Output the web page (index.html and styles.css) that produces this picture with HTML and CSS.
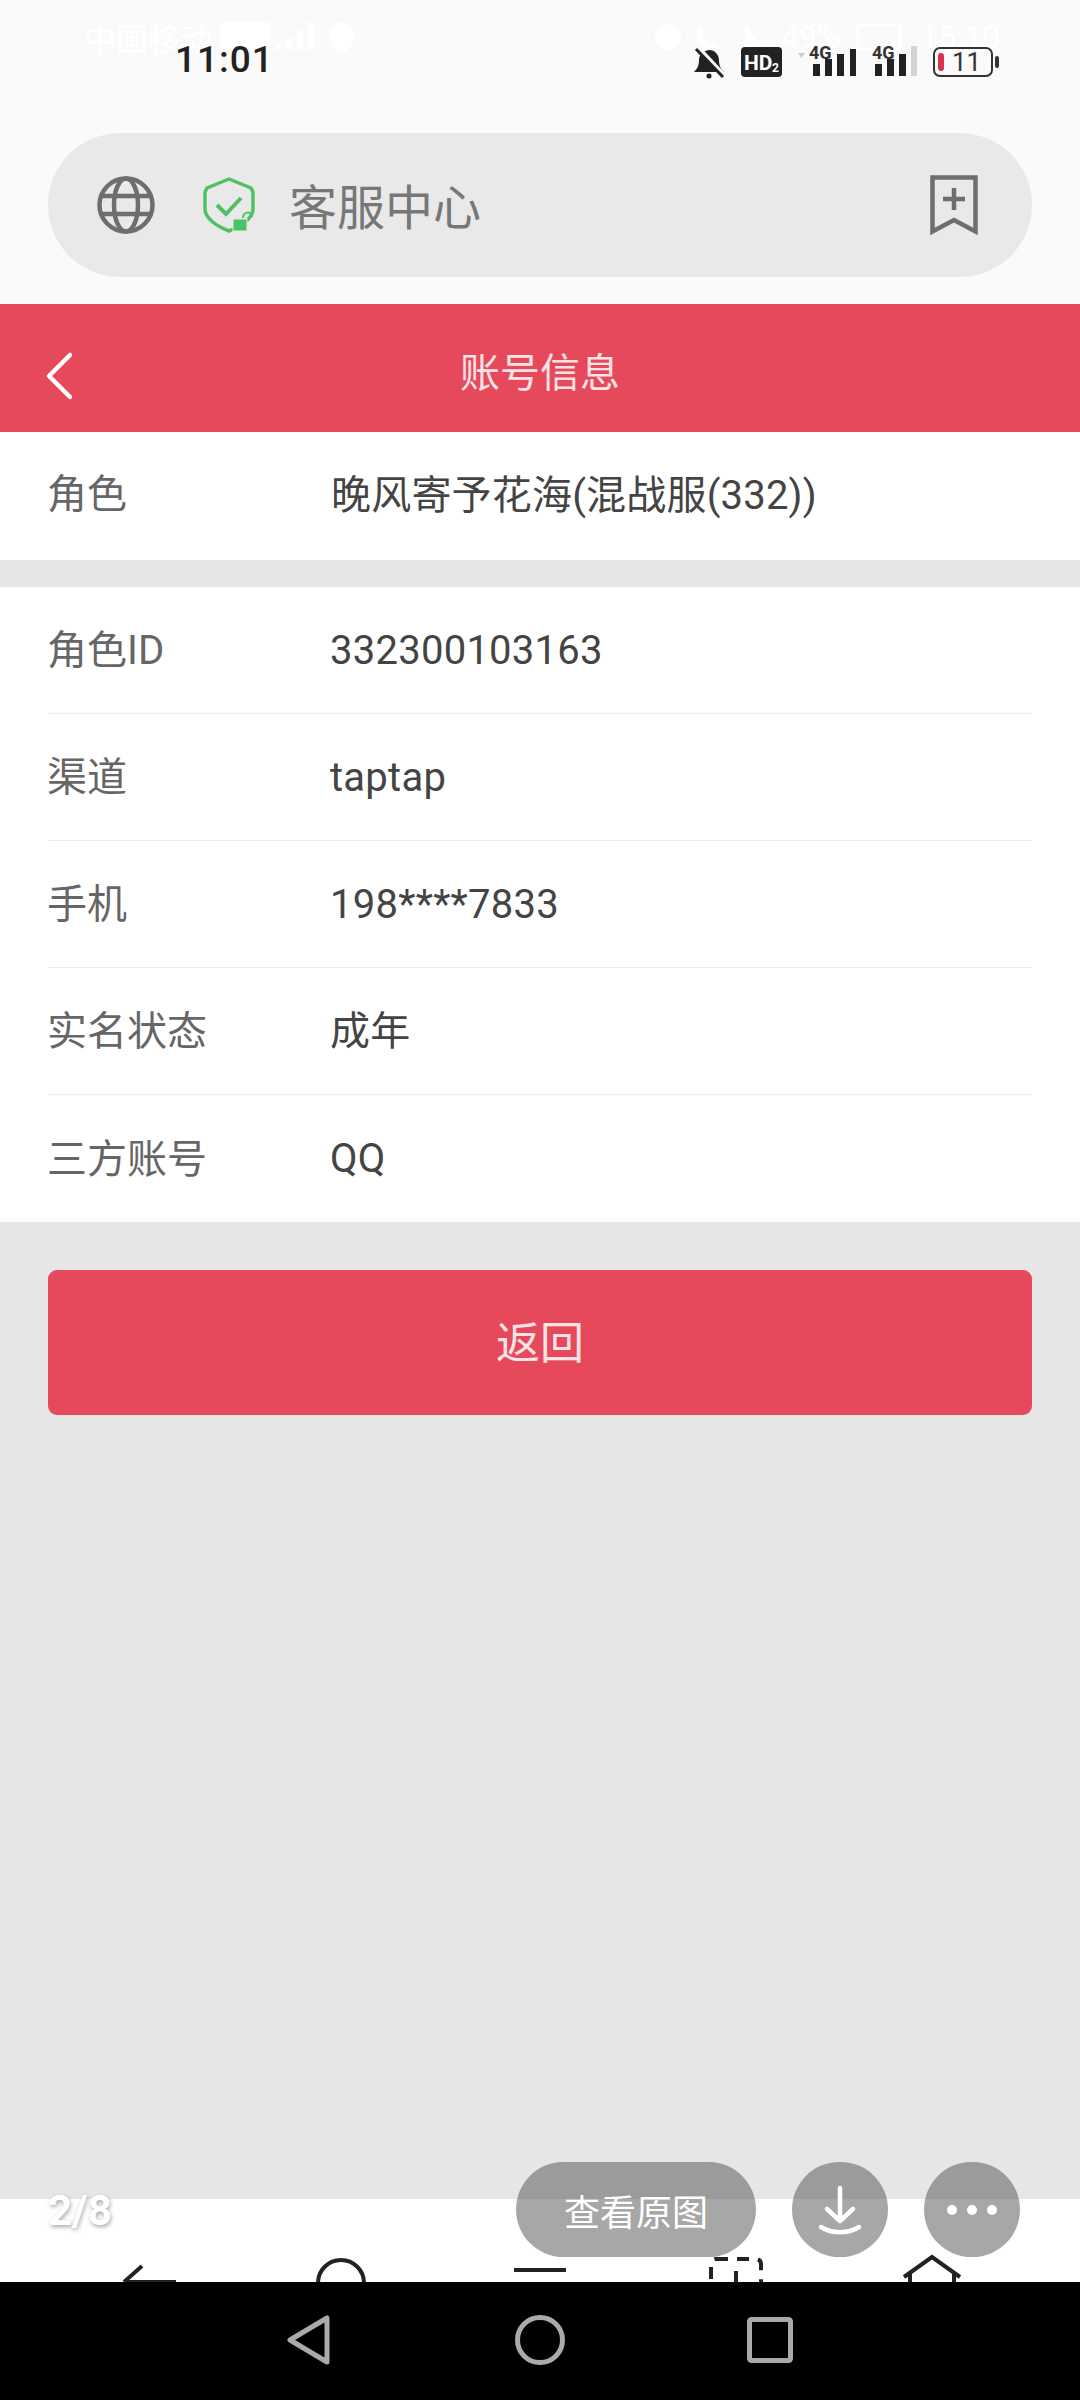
FILE: index.html
```html
<!DOCTYPE html>
<html lang="zh-CN">
<head>
    <meta charset="UTF-8">
    <meta name="viewport" content="width=device-width, initial-scale=1.0">
    <title>账号信息</title>
    <link rel="stylesheet" href="styles.css">
</head>
<body>

<div class="screen">
    <!-- leftovers of the screenshot below this one, white on near white -->
    <div class="ghost-status">
        <span>中国移动</span>
        <svg class="ghost-left-icons" width="135" height="30" viewBox="0 0 135 30" fill="#fff">
            <rect x="0" y="0" width="50" height="28" rx="3"/>
            <rect x="55" y="22" width="6" height="6"/>
            <rect x="66" y="16" width="6" height="12"/>
            <rect x="77" y="8" width="6" height="20"/>
            <rect x="88" y="0" width="6" height="28"/>
            <ellipse cx="122" cy="15" rx="12" ry="15"/>
        </svg>
        <svg class="ghost-right-icons" width="110" height="30" viewBox="0 0 110 30" fill="#fff">
            <circle cx="13" cy="15" r="13"/>
            <path d="M48 2a13 13 0 1 0 16 20a15 15 0 0 1-16-20z"/>
            <path d="M90 2l20 26H90z"/>
        </svg>
        <span class="ghost-text">49%</span>
        <svg class="ghost-batt" width="46" height="28" viewBox="0 0 46 28" fill="none" stroke="#fff" stroke-width="3">
            <rect x="2" y="2" width="42" height="24"/>
        </svg>
        <span class="ghost-text">15:10</span>
    </div>

    <!-- browser chrome -->
    <div class="browser">
        <div class="status-bar">
            <div class="time">11:01</div>
            <div class="status-icons">
                <svg class="icon-bell" width="32" height="32" viewBox="0 0 32 32">
                    <path d="M1 25c3-3 5-6 5-12 0-5 4-9 10-10 6 0 10 5 10 10 0 6 2 9 5 12z" fill="#222"/>
                    <circle cx="16" cy="29" r="2.500" fill="#222"/>
                    <path d="M5 0l27 29" stroke="#fafafa" stroke-width="4"/>
                    <path d="M3 2l27 28" stroke="#222" stroke-width="3"/>
                </svg>
                <svg class="icon-hd" width="41" height="30" viewBox="0 0 41 30">
                    <rect width="41" height="30" rx="4" fill="#222"/>
                    <text x="3" y="23" class="hd-text">HD</text>
                    <text x="31" y="25" class="hd-small">2</text>
                </svg>
                <svg class="icon-signal" width="58" height="34" viewBox="0 0 58 34">
                    <path d="M0 9h7l-3.500 5z" fill="#ccc"/>
                    <text x="11" y="15" class="net-text">4G</text>
                    <rect x="15" y="20" width="7" height="12" fill="#222"/>
                    <rect x="27" y="15" width="7" height="17" fill="#222"/>
                    <rect x="39" y="10" width="7" height="22" fill="#222"/>
                    <rect x="52" y="5" width="6" height="27" fill="#222"/>
                </svg>
                <svg class="icon-signal-2" width="45" height="34" viewBox="0 0 45 34">
                    <text x="0" y="15" class="net-text">4G</text>
                    <rect x="3" y="20" width="7" height="12" fill="#222"/>
                    <rect x="15" y="15" width="7" height="17" fill="#222"/>
                    <rect x="27" y="10" width="7" height="22" fill="#222"/>
                    <rect x="39" y="2" width="6" height="30" fill="#d4d4d4"/>
                </svg>
                <svg class="icon-battery" width="67" height="30" viewBox="0 0 67 30">
                    <rect x="1" y="1" width="58" height="28" rx="6" fill="none" stroke="#333" stroke-width="2"/>
                    <rect x="5" y="6" width="6" height="18" rx="3" fill="#d8324e"/>
                    <rect x="62" y="9" width="4" height="12" rx="2" fill="#333"/>
                    <text x="19" y="24" class="battery-text">11</text>
                </svg>
            </div>
        </div>

        <div class="url-pill">
            <svg class="icon-globe" width="58" height="58" viewBox="0 0 58 58" fill="none" stroke="#6e6e6e" stroke-width="4.500">
                <circle cx="29" cy="29" r="26.500"/>
                <ellipse cx="29" cy="29" rx="12" ry="26.500"/>
                <path d="M5 20h48M5 38h48"/>
            </svg>
            <svg class="icon-shield" width="52" height="56" viewBox="0 0 52 56" fill="none">
                <path d="M26 2l22 9 2 4v17c0 9-11 17-24 22C13 49 2 41 2 32V15l2-4z" stroke="#4cc266" stroke-width="3.500" stroke-linejoin="round"/>
                <path d="M14 28l9 9 15-16" stroke="#4cc266" stroke-width="4"/>
                <rect x="30" y="42" width="14" height="12" fill="#4cc266" stroke="#e9e9e9" stroke-width="1"/>
                <path d="M40 41c0-7 9-7 9-1" stroke="#4cc266" stroke-width="2"/>
            </svg>
            <span class="url-text">客服中心</span>
            <svg class="icon-bookmark" width="48" height="60" viewBox="0 0 48 60" fill="none" stroke="#6e6e6e" stroke-width="4.500">
                <path d="M2.500 2.500h43v54L24 45 2.500 56.500z"/>
                <path d="M13 24h22M24 13v22"/>
            </svg>
        </div>
    </div>

    <!-- page header -->
    <div class="header">
        <svg class="icon-back" width="28" height="48" viewBox="0 0 28 48" fill="none" stroke="#fff" stroke-width="4.500" stroke-linecap="round" stroke-linejoin="round">
            <path d="M25 3L4 24l21 21"/>
        </svg>
        <div class="header-title">账号信息</div>
    </div>

    <div class="section section-role">
        <div class="row">
            <div class="label">角色</div>
            <div class="value">晚风寄予花海(混战服(332))</div>
        </div>
    </div>

    <div class="section section-info">
        <div class="row">
            <div class="label">角色ID</div>
            <div class="value">332300103163</div>
        </div>
        <div class="row">
            <div class="label">渠道</div>
            <div class="value">taptap</div>
        </div>
        <div class="row">
            <div class="label">手机</div>
            <div class="value">198****7833</div>
        </div>
        <div class="row">
            <div class="label">实名状态</div>
            <div class="value value-cjk">成年</div>
        </div>
        <div class="row">
            <div class="label">三方账号</div>
            <div class="value">QQ</div>
        </div>
    </div>

    <div class="button-wrap">
        <div class="back-button">返回</div>
    </div>

    <div class="spacer"></div>

    <!-- browser tabs, cut off by the nav bar -->
    <div class="tabs">
        <svg width="60" height="83" viewBox="0 0 60 83" fill="none" stroke="#222" stroke-width="4">
            <path d="M24 67L6 83"/>
            <path d="M6 83h52"/>
        </svg>
        <svg class="tab-circle" width="60" height="83" viewBox="0 0 60 83" fill="none" stroke="#222" stroke-width="4">
            <circle cx="30" cy="84" r="23"/>
        </svg>
        <svg width="60" height="83" viewBox="0 0 60 83" fill="none" stroke="#222" stroke-width="4">
            <path d="M4 71h52"/>
        </svg>
        <svg width="60" height="83" viewBox="0 0 60 83" fill="none" stroke="#222" stroke-width="4" stroke-dasharray="12 9">
            <rect x="5" y="60" width="50" height="50" rx="5"/>
            <path d="M30 72v11" stroke-dasharray="none"/>
        </svg>
        <svg width="60" height="83" viewBox="0 0 60 83" fill="none" stroke="#222" stroke-width="4">
            <path d="M2 78l28-20 28 20M8 74v9M52 74v9"/>
        </svg>
    </div>

    <div class="nav-bar">
        <svg width="44" height="50" viewBox="0 0 44 50" fill="none" stroke="#aaa" stroke-width="5" stroke-linejoin="round">
            <path d="M40 3v44L3 25z"/>
        </svg>
        <svg class="nav-circle" width="50" height="50" viewBox="0 0 50 50" fill="none" stroke="#aaa" stroke-width="5">
            <circle cx="25" cy="25" r="22.500"/>
        </svg>
        <svg width="46" height="46" viewBox="0 0 46 46" fill="none" stroke="#aaa" stroke-width="5" stroke-linejoin="round">
            <rect x="2.500" y="2.500" width="41" height="41" rx="2"/>
        </svg>
    </div>

    <div class="page-count">2/8</div>

    <div class="viewer-actions">
        <div class="viewer-pill">查看原图</div>
        <div class="viewer-round">
            <svg width="42" height="48" viewBox="0 0 42 48" fill="none" stroke="#fff" stroke-width="4.500" stroke-linecap="round" stroke-linejoin="round">
                <path d="M21 2v32M8 23l13 12 13-12"/>
                <path d="M2 41c11 7 27 7 38 0"/>
            </svg>
        </div>
        <div class="viewer-round">
            <div class="dot"></div>
            <div class="dot"></div>
            <div class="dot"></div>
        </div>
    </div>
</div>

</body>
</html>
```

FILE: styles.css
```css
* {
    margin: 0;
    padding: 0;
    box-sizing: border-box;
}

body {
    font-family: 'Roboto', 'Noto Sans CJK SC', sans-serif;
    background-color: #e6e6e6;
}

svg {
    overflow: visible;
    flex-shrink: 0;
}

.screen {
    width: 1080px;
    height: 2400px;
    display: flex;
    flex-direction: column;
    position: relative;
    overflow: hidden;
    background-color: #e6e6e6;
}

/* Browser chrome */
.browser {
    height: 304px;
    background-color: #fafafa;
    padding: 0 48px;
    flex-shrink: 0;
}

.status-bar {
    height: 133px;
    display: flex;
    justify-content: space-between;
    align-items: flex-start;
    padding: 44px 32px 0 127px;
    position: relative;
}

.time {
    font-size: 37px;
    line-height: 32px;
    font-weight: 500;
    letter-spacing: 1px;
    color: #222;
}

.status-icons {
    display: flex;
    align-items: flex-start;
    gap: 16px;
}

.icon-bell, .icon-hd, .icon-battery {
    margin-top: 3px;
}

.hd-text {
    font-family: 'Roboto', sans-serif;
    font-size: 21px;
    font-weight: 700;
    fill: #fff;
}

.hd-small {
    font-family: 'Roboto', sans-serif;
    font-size: 12px;
    font-weight: 700;
    fill: #fff;
}

.net-text {
    font-family: 'Roboto', sans-serif;
    font-size: 18px;
    font-weight: 700;
    fill: #333;
}

.battery-text {
    font-family: 'Roboto', sans-serif;
    font-size: 26px;
    fill: #333;
}

.url-pill {
    height: 144px;
    border-radius: 72px;
    background-color: #e9e9e9;
    display: flex;
    align-items: center;
    padding: 0 54px 0 49px;
}

.icon-shield {
    margin-left: 48px;
}

.url-text {
    font-size: 48px;
    color: #777;
    margin-left: 34px;
    margin-bottom: 2px;
    flex: 1;
}

/* Page header */
.header {
    height: 128px;
    background-color: #e6495c;
    display: flex;
    align-items: center;
    justify-content: center;
    position: relative;
    flex-shrink: 0;
}

.header-title {
    font-size: 40px;
    color: #fbe3e6;
    margin-top: 4px;
}

.icon-back {
    position: absolute;
    left: 45px;
    top: 48px;
}

/* Info rows */
.section {
    background-color: #fff;
    flex-shrink: 0;
    padding: 0 48px;
}

.section-role {
    margin-bottom: 27px;
}

.row {
    height: 127px;
    display: flex;
    align-items: center;
    font-size: 40px;
    border-bottom: 1px solid #ececec;
}

.section-role .row {
    height: 128px;
    border-bottom: none;
    padding-bottom: 8px;
}

.section-role .value {
    margin-left: 1px;
    letter-spacing: 0.2px;
}

.section-role .label {
    margin-bottom: 2px;
}

.section-info .row:last-child {
    border-bottom: none;
}

.label {
    width: 283px;
    margin-left: -1px;
    margin-bottom: 6px;
    color: #666;
}

.value {
    color: #444;
    letter-spacing: 0.25px;
}

.value-cjk {
    margin-bottom: 6px;
}

.button-wrap {
    padding: 48px 48px 0;
    flex-shrink: 0;
}

.back-button {
    height: 145px;
    border-radius: 9px;
    background-color: #e6495c;
    color: #fbe3e6;
    font-size: 44px;
    display: flex;
    align-items: center;
    justify-content: center;
    padding-bottom: 5px;
}

.spacer {
    flex: 1;
}

/* Bottom bars */
.tabs {
    height: 83px;
    background-color: #fff;
    flex-shrink: 0;
    overflow: hidden;
    display: grid;
    grid-template-columns: repeat(5, 196px);
    justify-items: center;
    padding: 0 50px;
}

.tab-circle {
    margin-right: 6px;
}

.nav-bar {
    height: 118px;
    background-color: #000;
    flex-shrink: 0;
    display: flex;
    justify-content: center;
    align-items: center;
    gap: 182px;
    padding-bottom: 3px;
}

.nav-circle {
    margin-left: 2px;
}

/* Things lying over the page */
.ghost-status {
    position: absolute;
    top: 13px;
    left: 84px;
    right: 80px;
    height: 47px;
    display: flex;
    align-items: center;
    font-size: 32px;
    color: #fff;
}

.ghost-left-icons {
    margin-left: 8px;
}

.ghost-right-icons {
    margin-left: auto;
    margin-right: 16px;
}

.ghost-batt {
    margin: 0 18px 0 16px;
}

.page-count {
    position: absolute;
    left: 48px;
    top: 2186px;
    font-size: 42px;
    font-weight: 700;
    color: #fff;
    text-shadow: 1px 2px 4px rgba(0, 0, 0, 0.35);
}

.viewer-actions {
    position: absolute;
    left: 516px;
    top: 2162px;
    display: flex;
    gap: 36px;
}

.viewer-pill, .viewer-round {
    height: 95px;
    border-radius: 48px;
    background: rgba(80, 80, 80, 0.5);
    display: flex;
    align-items: center;
    justify-content: center;
    color: #fff;
}

.viewer-pill {
    width: 240px;
    font-size: 36px;
}

.viewer-round {
    width: 96px;
    gap: 10px;
}

.dot {
    width: 10px;
    height: 10px;
    border-radius: 50%;
    background-color: #fff;
}
```
